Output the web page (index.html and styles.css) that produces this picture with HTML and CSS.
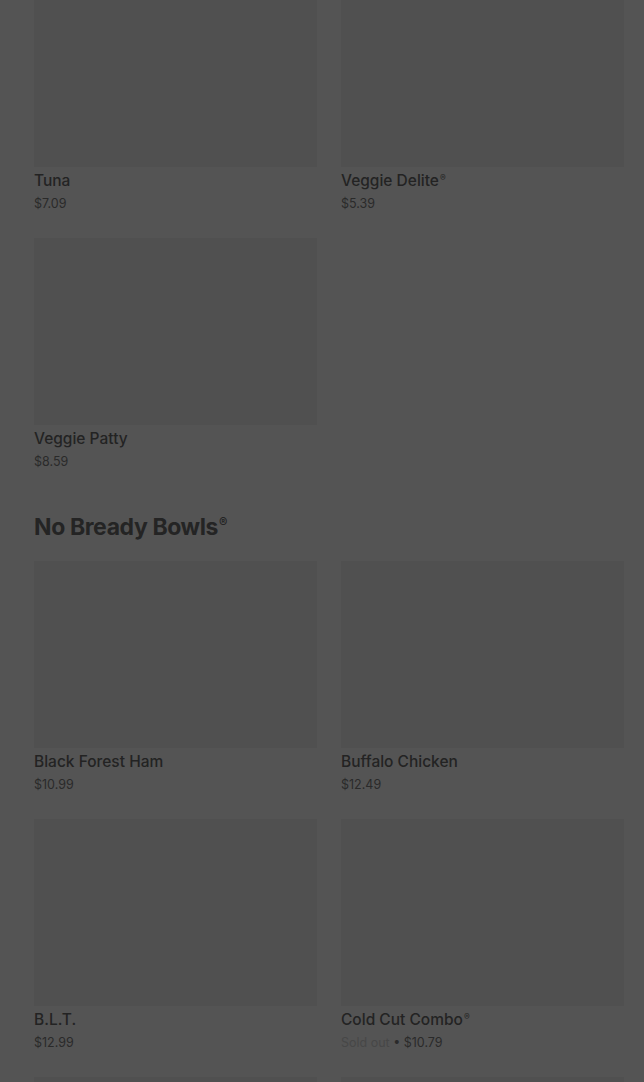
FILE: index.html
```html
<!DOCTYPE html>
<html>
<head>
<meta charset="utf-8">
<link rel="stylesheet" href="styles.css">
</head>
<body>
<main class="menu">
  <section class="section section-first">
    <div class="grid">
      <div class="card"><div class="thumb"></div><div class="name">Tuna</div><div class="price">$7.09</div></div>
      <div class="card"><div class="thumb"></div><div class="name">Veggie Delite<sup>®</sup></div><div class="price">$5.39</div></div>
      <div class="card"><div class="thumb"></div><div class="name">Veggie Patty</div><div class="price">$8.59</div></div>
    </div>
  </section>
  <section class="section">
    <h2 class="heading">No Bready Bowls<sup>®</sup></h2>
    <div class="grid">
      <div class="card"><div class="thumb"></div><div class="name">Black Forest Ham</div><div class="price">$10.99</div></div>
      <div class="card"><div class="thumb"></div><div class="name">Buffalo Chicken</div><div class="price">$12.49</div></div>
      <div class="card"><div class="thumb"></div><div class="name">B.L.T.</div><div class="price">$12.99</div></div>
      <div class="card"><div class="thumb"></div><div class="name">Cold Cut Combo<sup>®</sup></div><div class="price"><span class="sold">Sold out</span> • $10.79</div></div>
      <div class="card"><div class="thumb"></div></div>
      <div class="card"><div class="thumb"></div></div>
    </div>
  </section>
</main>
</body>
</html>
```

FILE: styles.css
```css
html, body {
  margin: 0;
  padding: 0;
  background: #545454;
  overflow: hidden;
}
body {
  font-family: Inter, "Noto Sans", sans-serif;
  color: #222222;
  height: 1082px;
}
.menu {
  padding: 0 20px 0 34px;
  margin-top: -20px;
}
.section-first {
  padding-bottom: 37px;
}
.grid {
  display: grid;
  grid-template-columns: 1fr 1fr;
  column-gap: 24px;
  row-gap: 22px;
}
.thumb {
  height: 187px;
  background: #505050;
}
.name {
  margin-top: 3px;
  font-size: 15.5px;
  line-height: 22px;
  font-weight: 500;
  color: #232323;
}
.name sup, .heading sup {
  font-size: 0.55em;
  line-height: 0;
  vertical-align: 0;
  position: relative;
  top: -0.6em;
  margin-left: 1px;
}
.price {
  font-size: 12.5px;
  line-height: 24px;
  color: #2a2a2a;
}
.sold {
  color: #474747;
}
.heading {
  margin: 0 0 18px;
  font-size: 23px;
  line-height: 32px;
  font-weight: 700;
  letter-spacing: -0.4px;
  color: #242424;
}
```
